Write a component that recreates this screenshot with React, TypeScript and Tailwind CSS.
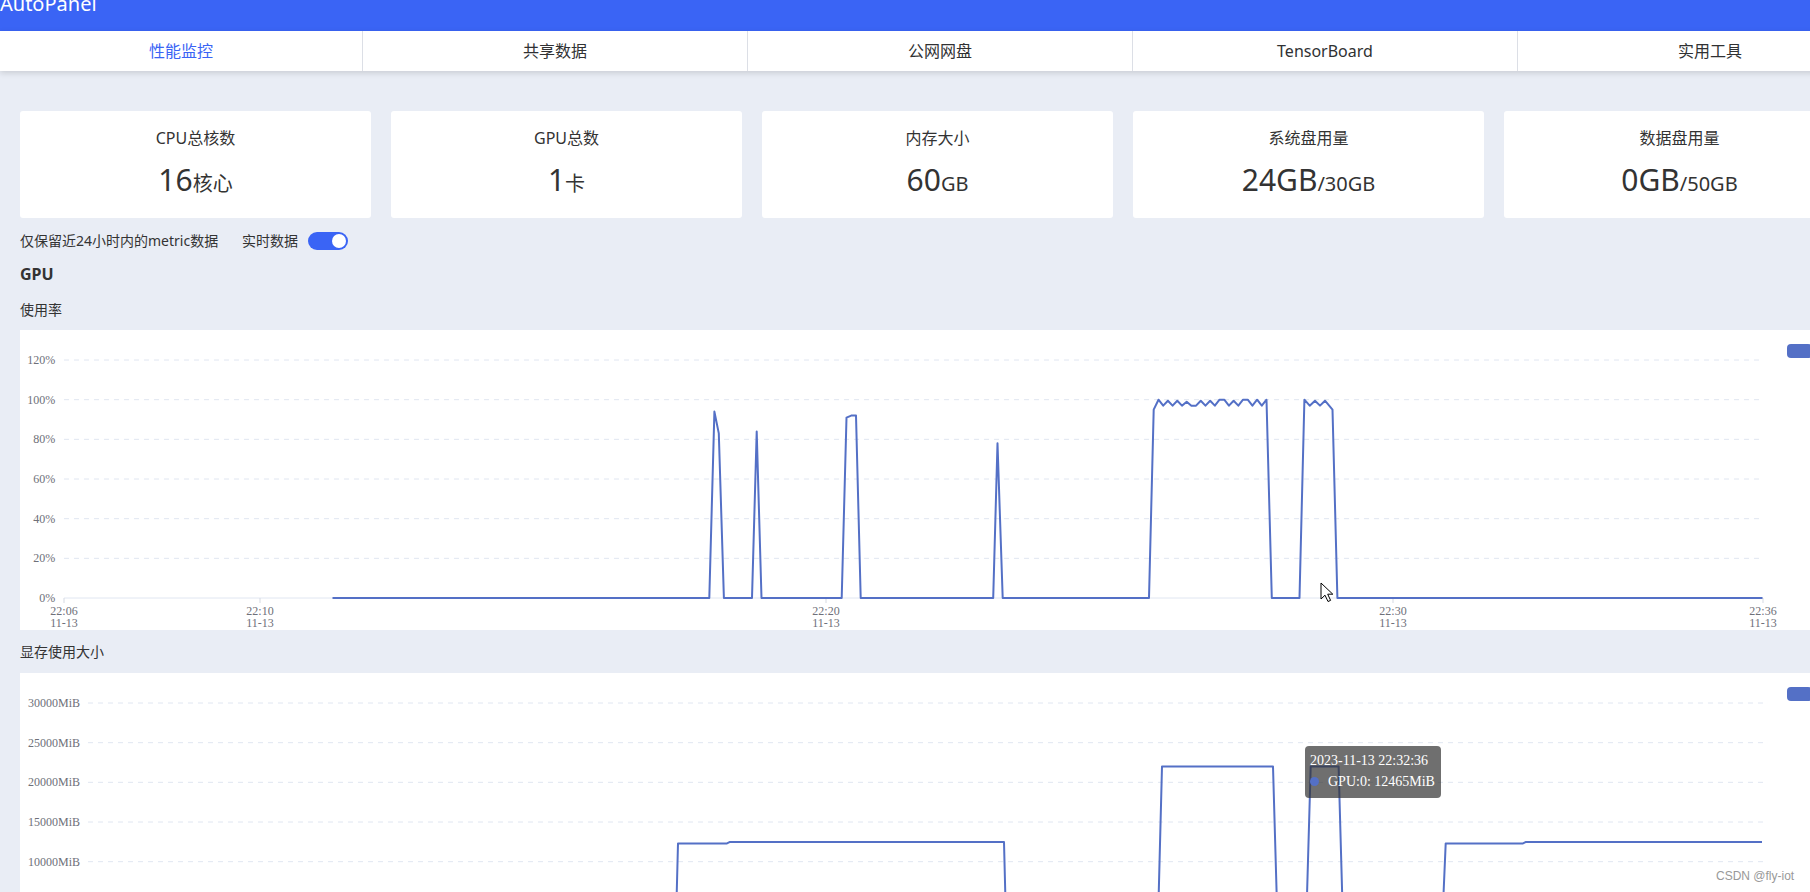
import React from "react";

const LINE = "#5470c6";
const SERIF = "'Liberation Serif', 'Times New Roman', serif";

type Pt = [number, number];

const tabs = ["性能监控", "共享数据", "公网网盘", "TensorBoard", "实用工具"];

const cards = [
  { label: "CPU总核数", value: "16", unit: "核心" },
  { label: "GPU总数", value: "1", unit: "卡" },
  { label: "内存大小", value: "60", unit: "GB" },
  { label: "系统盘用量", value: "24GB", unit: "/30GB" },
  { label: "数据盘用量", value: "0GB", unit: "/50GB" },
];

// usage chart: 0% sits at y=598, 1% = 1.983px
const pct = (p: number) => 598 - p * 1.983;

const usagePoints: Pt[] = (() => {
  const pts: Pt[] = [
    [332.5, 598], [709.3, 598], [714.4, pct(94)], [718.8, pct(83)], [723.9, 598],
    [752, 598], [756.7, pct(84)], [761.5, 598],
    [841.7, 598], [846.5, pct(91)], [851.2, pct(92)], [856, pct(92)], [860.7, 598],
    [993.2, 598], [997.5, pct(78)], [1002.7, 598],
    [1149, 598], [1153.7, pct(95)],
  ];
  const zig = [100, 97, 99.5, 97, 99.5, 97, 99, 97, 97, 99.5, 97, 99.5, 97, 100, 100, 97, 99.5, 97, 100, 100, 97, 100, 97, 100];
  const step = 108 / (zig.length - 1);
  zig.forEach((v, i) => pts.push([1158.5 + i * step, pct(v)]));
  pts.push(
    [1271.8, 598], [1299.5, 598], [1304.4, pct(100)], [1309.7, pct(97)], [1315, pct(99.5)],
    [1320, pct(97)], [1325, pct(99.5)], [1332.5, pct(95)], [1337.4, 598], [1762.5, 598]
  );
  return pts;
})();

// memory chart: 0 MiB at y=940.7, 5000MiB per 39.67px
const mem = (v: number) => 940.7 - (v / 5000) * 39.67;

const memPoints: Pt[] = [
  [352, mem(0)], [675.5, mem(0)], [678, mem(12300)], [727, mem(12300)], [729.5, mem(12465)],
  [1004, mem(12465)], [1006.5, mem(0)], [1157.5, mem(0)], [1162, mem(22000)], [1273, mem(22000)],
  [1278, mem(0)], [1305.7, mem(0)], [1310.7, mem(22000)], [1338.6, mem(22000)], [1343.5, mem(0)],
  [1441.5, mem(0)], [1445.7, mem(12300)], [1523, mem(12300)], [1525.5, mem(12465)], [1762, mem(12465)],
];

function GridChart({
  top,
  left,
  labelRight,
  yLabels,
  xLabels,
  points,
  cursor,
}: {
  top: number;
  left: number;
  labelRight: number;
  yLabels: string[];
  xLabels: { x: number; t: string }[];
  points: Pt[];
  cursor?: boolean;
}) {
  const right = 1763;
  const step = 39.667;
  const axisY = top + 30 + step * (yLabels.length - 1);
  return (
    <svg width={1885} height={300} viewBox={`20 ${top} 1885 300`} className="block">
      {yLabels.map((l, i) => {
        const y = top + 30 + i * step;
        const axis = i === yLabels.length - 1;
        return (
          <g key={l}>
            <line
              x1={left}
              x2={right}
              y1={y}
              y2={y}
              stroke="#e0e6f1"
              strokeWidth={1}
              strokeDasharray={axis ? undefined : "5 5"}
            />
            {/* labels that fall below the visible window are left out */}
            {y < 885 && (
              <text x={labelRight} y={y} textAnchor="end" dominantBaseline="central" fontSize={12} fill="#6e7079" fontFamily={SERIF}>
                {l}
              </text>
            )}
          </g>
        );
      })}
      {xLabels.map((l) => (
        <g key={l.t}>
          <line x1={l.x} x2={l.x} y1={axisY} y2={axisY + 5} stroke="#d5d9e2" />
          <text x={l.x} y={axisY + 13} textAnchor="middle" dominantBaseline="central" fontSize={12} fill="#6e7079" fontFamily={SERIF}>
            {l.t}
          </text>
          <text x={l.x} y={axisY + 24.7} textAnchor="middle" dominantBaseline="central" fontSize={12} fill="#6e7079" fontFamily={SERIF}>
            11-13
          </text>
        </g>
      ))}
      <polyline points={points.map((p) => p.join(",")).join(" ")} fill="none" stroke={LINE} strokeWidth={2} strokeLinejoin="round" />
      <rect x={1787} y={top + 14} width={25} height={14} rx={4} fill={LINE} />
      {cursor && (
        <path
          d="M1321 583 L1321 599 L1325 595.2 L1328 601.5 L1330.6 600.4 L1327.7 594.2 L1332.8 594.2 Z"
          fill="#fff"
          stroke="#000"
          strokeWidth={1}
          strokeLinejoin="round"
        />
      )}
    </svg>
  );
}

function Toggle() {
  return (
    <div className="w-[40px] h-[18px] rounded-full bg-[#3a64f5] flex items-center justify-end px-[2px]">
      <div className="w-[14px] h-[14px] rounded-full bg-white" />
    </div>
  );
}

export default function App() {
  return (
    <div className="relative w-[1810px] h-[892px] overflow-hidden bg-[#e9edf5] text-[#333] font-[family-name:'Noto_Sans','Noto_Sans_CJK_SC',sans-serif]">
      <div className="w-[1925px]">
        <header className="h-[31px] bg-[#3a64f5] overflow-hidden">
          <div className="text-white text-[20px] leading-[20px] -mt-[6px]">AutoPanel</div>
        </header>

        <nav className="relative z-10 flex h-[40px] bg-white shadow-[0_2px_6px_rgba(0,0,0,0.14)]">
          {tabs.map((t, i) => (
            <div
              key={t}
              className={
                i === 0
                  ? "w-[362px] shrink-0 text-center text-[16px] leading-[40px] text-[#3a64f5]"
                  : "w-[385px] shrink-0 border-l border-[#dcdfe6] text-center text-[16px] leading-[40px] text-[#303133]"
              }
            >
              {t}
            </div>
          ))}
        </nav>

        <main className="px-5 pt-10">
          <div className="flex gap-5">
            {cards.map((c) => (
              <div key={c.label} className="w-[351px] h-[107px] shrink-0 bg-white rounded-[3px] flex flex-col items-center pt-4">
                <div className="text-[16px] leading-[22px]">{c.label}</div>
                <div className="mt-[11px] leading-[40px] whitespace-nowrap">
                  <span className="text-[30px]">{c.value}</span>
                  <span className="text-[20px]">{c.unit}</span>
                </div>
              </div>
            ))}
          </div>

          <div className="mt-[13px] flex items-center h-[20px] text-[14px] leading-[20px]">
            <span className="w-[222px] shrink-0">仅保留近24小时内的metric数据</span>
            <span>实时数据</span>
            <div className="ml-[10px]">
              <Toggle />
            </div>
          </div>

          <div className="mt-[12px] text-[16px] leading-[22px] font-bold">GPU</div>
          <div className="mt-[15px] text-[14px] leading-[20px]">使用率</div>

          <div className="mt-[10px] w-[1885px] h-[300px] bg-white">
            <GridChart
              top={330}
              left={64}
              labelRight={55.3}
              yLabels={["120%", "100%", "80%", "60%", "40%", "20%", "0%"]}
              xLabels={[
                { x: 64, t: "22:06" },
                { x: 260, t: "22:10" },
                { x: 826, t: "22:20" },
                { x: 1393, t: "22:30" },
                { x: 1763, t: "22:36" },
              ]}
              points={usagePoints}
              cursor
            />
          </div>

          <div className="mt-[12px] text-[14px] leading-[20px]">显存使用大小</div>

          <div className="relative mt-[11px] w-[1885px] h-[300px] bg-white">
            <GridChart
              top={672.7}
              left={88}
              labelRight={80}
              yLabels={["30000MiB", "25000MiB", "20000MiB", "15000MiB", "10000MiB", "5000MiB", "0MiB"]}
              xLabels={[]}
              points={memPoints}
            />
            <div className="absolute left-[1285px] top-[73px] w-[136px] h-[52px] rounded-[4px] bg-[rgba(50,50,50,0.7)] px-[5px] pt-[4px] text-white text-[14px] leading-[21px] font-[family-name:'Liberation_Serif',serif]">
              <div className="whitespace-nowrap">2023-11-13 22:32:36</div>
              <div className="flex items-center whitespace-nowrap">
                <span className="w-[9px] h-[9px] rounded-full bg-[#5470c6] shrink-0" />
                <span className="ml-[9px]">GPU:0: 12465MiB</span>
              </div>
            </div>
          </div>
        </main>
      </div>

      <div className="absolute left-[1716px] top-[868px] text-[12px] leading-[16px] text-[#999] font-[family-name:'Liberation_Sans',Arial,sans-serif]">
        CSDN @fly-iot
      </div>
    </div>
  );
}
